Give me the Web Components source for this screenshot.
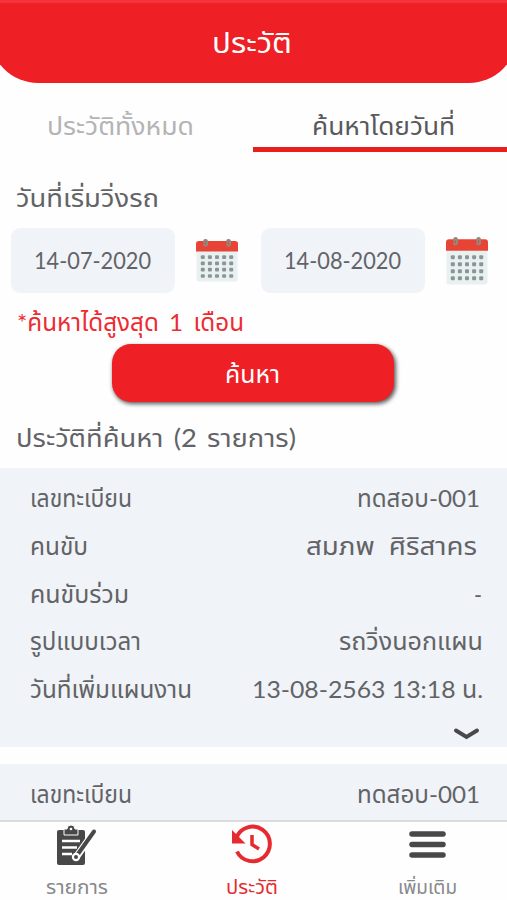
<!DOCTYPE html>
<html lang="th">
<head>
<meta charset="utf-8">
<meta name="viewport" content="width=device-width, initial-scale=1">
<title>ประวัติ</title>
<style>
    html, body {
        margin: 0;
        height: 900px;
        overflow: hidden;
        background: #fefefe;
        color: #626366;
        font-family: Lato, "Noto Sans Thai", "Noto Sans", sans-serif;
    }
</style>
</head>
<body>
<history-page></history-page>

<script>
// One line of text, squeezed or stretched to a given width
class FitText extends HTMLElement {
    constructor() {
        super();
        this.attachShadow({ mode: 'open' });
    }

    connectedCallback() {
        const width = this.getAttribute('width');
        const size = this.getAttribute('size') || 24;

        this.shadowRoot.innerHTML = `<style>
                :host {
                    display: block;
                    flex: none;
                    width: ${width}px;
                    height: 30px;
                    font-size: ${size}px;
                    line-height: 30px;
                    white-space: nowrap;
                }
                span {
                    display: block;
                    width: max-content;
                    white-space: pre;
                    transform-origin: 0 50%;
                }
            </style><span><slot></slot></span>`;

        const span = this.shadowRoot.querySelector('span');
        const natural = span.getBoundingClientRect().width;
        if (natural > 0) {
            span.style.transform = `scaleX(${width / natural})`;
        }
    }
}

class AppHeader extends HTMLElement {
    constructor() {
        super();
        this.attachShadow({ mode: 'open' });
        this.shadowRoot.innerHTML = `
            <style>
                :host {
                    display: flex;
                    justify-content: center;
                    box-sizing: border-box;
                    height: 83px;
                    margin: 0 -10px;
                    padding: 24px 3px 0 0;
                    border-top: 3px solid #f5333a;
                    border-radius: 0 0 48px 48px;
                    background: #ee1f25;
                    color: #fff;
                }
            </style>
            <slot></slot>
        `;
    }
}

class TabItem extends HTMLElement {
    constructor() {
        super();
        this.attachShadow({ mode: 'open' });
        this.shadowRoot.innerHTML = `
            <style>
                :host {
                    display: flex;
                    justify-content: center;
                    box-sizing: border-box;
                    width: 253px;
                    height: 69px;
                    padding-top: 27px;
                    color: #b4b4b6;
                }
                :host([active]) {
                    flex: 1;
                    padding-left: 7px;
                    border-bottom: 5px solid #e8201d;
                    color: #58595b;
                }
                :host(:not([active])) { padding-right: 13px; }
            </style>
            <slot></slot>
        `;
    }
}

class CalendarIcon extends HTMLElement {
    constructor() {
        super();
        this.attachShadow({ mode: 'open' });
    }

    connectedCallback() {
        const height = this.getAttribute('height') || 44;
        let dots = '';
        for (let row = 0; row < 4; row++) {
            for (let col = 0; col < 5; col++) {
                dots += `<rect x="${4.8 + col * 7.1}" y="${17 + row * 6.6}" width="4" height="3.800" rx="1"/>`;
            }
        }
        this.shadowRoot.innerHTML = `
            <style>
                :host { display: block; flex: none; }
                svg { display: block; }
            </style>
            <svg width="42" height="${height}" viewBox="0 0 42 45" preserveAspectRatio="none">
                <rect x=".5" y="3" width="41" height="41.5" rx="3" fill="#e8f0f0"/>
                <path d="M0 13V5q0-3 3-3h36q3 0 3 3v8z" fill="#e84435"/>
                <g fill="#8a9696">${dots}</g>
                <g fill="none" stroke="#8d8c80" stroke-width="2" stroke-linecap="round">
                    <path d="M8.500 4q-1-3 1-3t1.500 3v2q-1.500 2-3 0M31.500 4q-1-3 1-3t1.500 3v2q-1.500 2-3 0"/>
                </g>
            </svg>
        `;
    }
}

class DateField extends HTMLElement {
    constructor() {
        super();
        this.attachShadow({ mode: 'open' });
    }

    connectedCallback() {
        this.shadowRoot.innerHTML = `
            <style>
                :host { display: flex; align-items: center; gap: 21px; }
                .box {
                    display: flex;
                    align-items: center;
                    justify-content: center;
                    box-sizing: border-box;
                    width: 164px;
                    height: 65px;
                    padding: 0 1px 2px 0;
                    border-radius: 9px;
                    background: #f0f3f8;
                }
            </style>
            <div class="box"><fit-text width="117" size="24">${this.getAttribute('value')}</fit-text></div>
            <calendar-icon height="${this.getAttribute('icon-height')}"></calendar-icon>
        `;
    }
}

class SearchButton extends HTMLElement {
    constructor() {
        super();
        this.attachShadow({ mode: 'open' });
        this.shadowRoot.innerHTML = `
            <style>
                :host {
                    display: flex;
                    align-items: center;
                    justify-content: center;
                    box-sizing: border-box;
                    width: 282px;
                    height: 58px;
                    padding: 2px 1px 0 0;
                    border-radius: 19px;
                    background: #ee1f25;
                    box-shadow: 1.5px 2px 4px rgba(0, 0, 0, .65);
                    color: #fff;
                }
            </style>
            <slot></slot>
        `;
    }
}

class HistoryRow extends HTMLElement {
    constructor() {
        super();
        this.attachShadow({ mode: 'open' });
        this.shadowRoot.innerHTML = `
            <style>
                :host {
                    display: flex;
                    justify-content: space-between;
                    height: 47.75px;
                    padding: 0 24px 0 30px;
                }
            </style>
            <slot></slot>
        `;
    }
}

class HistoryCard extends HTMLElement {
    constructor() {
        super();
        this.attachShadow({ mode: 'open' });
        this.shadowRoot.innerHTML = `
            <style>
                :host {
                    display: block;
                    box-sizing: border-box;
                    height: 279px;
                    padding-top: 15px;
                    background: #f0f3f7;
                }
                svg { display: block; margin: 4px 27px 0 auto; }
            </style>
            <slot></slot>
            <svg width="27" height="16" viewBox="0 0 27 16">
                <path d="M3 4.500l10.500 6.500L24 4.500" fill="none" stroke="#48494b" stroke-width="4" stroke-linecap="round"/>
            </svg>
        `;
    }
}

const NAV_ICONS = {
    list: `
        <path d="M1 8q0-2 2-2h24q2 0 2 2v31q0 2-2 2H3q-2 0-2-2z" fill="#484848"/>
        <path d="M8 11V5h3q0-4 4-4t4 4h3v6z" fill="#484848" stroke="#fff" stroke-width="1"/>
        <circle cx="15" cy="5" r="1.300" fill="#fff"/>
        <path d="M6 17h18M6 23.500h15M6 30h10" stroke="#fff" stroke-width="2.500"/>
        <path d="M38 8L21 32" stroke="#fff" stroke-width="7"/>
        <path d="M38 7.500L22 30" stroke="#484848" stroke-width="4" stroke-linecap="round"/>
        <circle cx="20" cy="33" r="4.200" fill="#fff"/>
        <circle cx="20" cy="33" r="2" fill="#484848"/>`,
    clock: `
        <path d="M4.500 13.500A17.300 17.300 0 1 1 5 27.500" fill="none" stroke="#e52b30" stroke-width="4"/>
        <path d="M0 6v13.500h13.500z" fill="#e52b30"/>
        <path d="M20 11v9.500l7 4.500" fill="none" stroke="#e52b30" stroke-width="3.500"/>`,
    menu: `
        <path d="M5 10h31M5 20.500h31M5 31h31" stroke="#484848" stroke-width="5.500" stroke-linecap="round"/>`
};

class NavItem extends HTMLElement {
    constructor() {
        super();
        this.attachShadow({ mode: 'open' });
    }

    connectedCallback() {
        this.shadowRoot.innerHTML = `
            <style>
                :host {
                    display: flex;
                    flex: none;
                    flex-direction: column;
                    align-items: center;
                    width: 175.5px;
                    color: #88898b;
                }
                :host([active]) { color: #e52b30; }
                svg { display: block; flex: none; margin-bottom: 6px; }
            </style>
            <svg width="41" height="42" viewBox="0 0 41 42">${NAV_ICONS[this.getAttribute('icon')]}</svg>
            <slot></slot>
        `;
    }
}

class NavBar extends HTMLElement {
    constructor() {
        super();
        this.attachShadow({ mode: 'open' });
        this.shadowRoot.innerHTML = `
            <style>
                :host {
                    display: flex;
                    justify-content: center;
                    box-sizing: border-box;
                    flex: none;
                    height: 80px;
                    padding: 2px 3px 0 0;
                    border-top: 2px solid #d9dbde;
                    background: #fefefe;
                }
            </style>
            <slot></slot>
        `;
    }
}

class HistoryPage extends HTMLElement {
    constructor() {
        super();
        this.attachShadow({ mode: 'open' });
    }

    connectedCallback() {
        this.shadowRoot.innerHTML = `
            <style>
                :host {
                    display: flex;
                    flex-direction: column;
                    width: 507px;
                    height: 900px;
                    overflow: hidden;
                }
                main { flex: 1; min-height: 0; overflow: hidden; }
                .tabs { display: flex; }
                .title { padding: 30px 0 2px 16px; }
                .dates { display: flex; gap: 23px; padding: 14px 0 0 11px; }
                .note { padding: 14px 0 0 17px; color: #ee2b31; word-spacing: 4px; }
                search-button { margin: 7px 0 0 112px; }
                .found { padding: 20px 0 16px 16px; word-spacing: 3px; }
                history-card + history-card { margin-top: 17px; }
                .in1 { margin-right: 3px; }
                .in2 { margin-right: 6px; }
                .in0 { margin-right: 1px; }
            </style>
            <main>
                <app-header><fit-text width="80" size="29">ประวัติ</fit-text></app-header>
                <div class="tabs">
                    <tab-item><fit-text width="147" size="25">ประวัติทั้งหมด</fit-text></tab-item>
                    <tab-item active><fit-text width="143" size="25">ค้นหาโดยวันที่</fit-text></tab-item>
                </div>
                <div class="title"><fit-text width="143" size="25">วันที่เริ่มวิ่งรถ</fit-text></div>
                <div class="dates">
                    <date-field value="14-07-2020" icon-height="43"></date-field>
                    <date-field value="14-08-2020" icon-height="48"></date-field>
                </div>
                <div class="note"><fit-text width="227" size="24">*ค้นหาได้สูงสุด 1 เดือน</fit-text></div>
                <search-button><fit-text width="55" size="24">ค้นหา</fit-text></search-button>
                <div class="found"><fit-text width="280" size="25">ประวัติที่ค้นหา (2 รายการ)</fit-text></div>
                <history-card>
                    <history-row><fit-text width="102">เลขทะเบียน</fit-text><fit-text class="in1" width="123">ทดสอบ-001</fit-text></history-row>
                    <history-row><fit-text width="58">คนขับ</fit-text><fit-text class="in2" width="171">สมภพ  ศิริสาคร</fit-text></history-row>
                    <history-row><fit-text width="99">คนขับร่วม</fit-text><fit-text class="in0" width="8">-</fit-text></history-row>
                    <history-row><fit-text width="111">รูปแบบเวลา</fit-text><fit-text width="144">รถวิ่งนอกแผน</fit-text></history-row>
                    <history-row><fit-text width="162">วันที่เพิ่มแผนงาน</fit-text><fit-text width="231">13-08-2563 13:18 น.</fit-text></history-row>
                </history-card>
                <history-card>
                    <history-row><fit-text width="102">เลขทะเบียน</fit-text><fit-text class="in1" width="123">ทดสอบ-001</fit-text></history-row>
                </history-card>
            </main>
            <nav-bar>
                <nav-item icon="list"><fit-text width="62" size="19">รายการ</fit-text></nav-item>
                <nav-item icon="clock" active><fit-text width="52" size="19">ประวัติ</fit-text></nav-item>
                <nav-item icon="menu"><fit-text width="59" size="19">เพิ่มเติม</fit-text></nav-item>
            </nav-bar>
        `;
    }
}

customElements.define('fit-text', FitText);
customElements.define('app-header', AppHeader);
customElements.define('tab-item', TabItem);
customElements.define('calendar-icon', CalendarIcon);
customElements.define('date-field', DateField);
customElements.define('search-button', SearchButton);
customElements.define('history-row', HistoryRow);
customElements.define('history-card', HistoryCard);
customElements.define('nav-item', NavItem);
customElements.define('nav-bar', NavBar);
customElements.define('history-page', HistoryPage);
</script>
</body>
</html>
